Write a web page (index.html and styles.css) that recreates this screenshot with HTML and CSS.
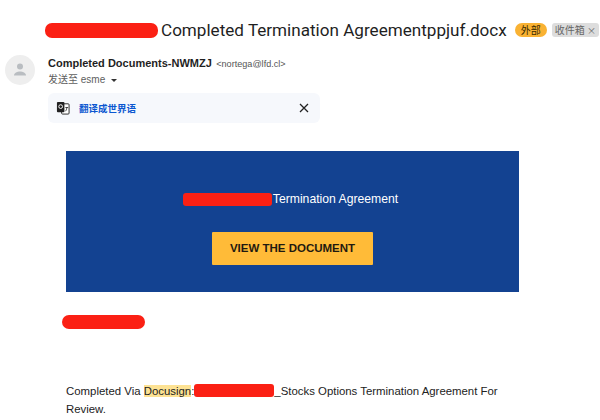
FILE: index.html
```html
<!DOCTYPE html>
<html lang="en">
<head>
    <meta charset="UTF-8">
    <title>Completed Termination Agreement</title>
    <link rel="stylesheet" href="styles.css">
</head>
<body>
    <div class="subject-row">
        <span class="redact redact-subject"></span>
        <h1 class="subject">Completed Termination Agreementppjuf.docx</h1>
        <span class="tag tag-external">外部</span>
        <span class="tag tag-inbox">收件箱 <span class="tag-x">×</span></span>
    </div>

    <div class="sender-row">
        <div class="avatar">
            <svg width="20" height="20" viewBox="0 0 20 20">
                <circle cx="10" cy="6.5" r="3" fill="#b9bdc1"/>
                <path d="M4 15.500c0-2.600 3.500-4 6-4s6 1.400 6 4z" fill="#b9bdc1"/>
            </svg>
        </div>
        <div class="sender-info">
            <div class="sender-line">
                <span class="sender-name">Completed Documents-NWMZJ</span>
                <span class="sender-mail">&lt;nortega@lfd.cl&gt;</span>
            </div>
            <div class="to-line">发送至 esme <span class="caret"></span></div>
            <div class="translate-bar">
                <svg class="translate-icon" width="14" height="14" viewBox="0 0 15 15">
                    <rect x="6" y="3" width="8" height="11" rx="1" fill="#fff" stroke="#222"/>
                    <rect x="1" y="1" width="8" height="11" rx="1" fill="#222"/>
                    <circle cx="5" cy="6" r="2" fill="none" stroke="#fff"/>
                    <path d="M10 7h3M11.500 7c0 2-.6 3-1.500 4" fill="none" stroke="#222" stroke-width=".9"/>
                </svg>
                <span class="translate-link">翻译成世界语</span>
                <svg class="close-icon" width="10" height="10" viewBox="0 0 10 10">
                    <path d="M1 1l8 8M9 1l-8 8" stroke="#222" stroke-width="1.300"/>
                </svg>
            </div>
        </div>
    </div>

    <div class="mail-body">
        <div class="banner">
            <div class="banner-title">
                <span class="redact redact-banner"></span><span>Termination Agreement</span>
            </div>
            <a class="view-button">VIEW THE DOCUMENT</a>
        </div>

        <span class="redact redact-name"></span>

        <p class="mail-text">Completed Via <mark class="hl">Docusign</mark>:<span class="redact redact-inline"></span>_Stocks Options Termination Agreement For Review.</p>
    </div>
</body>
</html>
```

FILE: styles.css
```css
body {
    margin: 0;
    width: 600px;
    height: 420px;
    overflow: hidden;
    background: #fff;
    color: #1f1f1f;
    font-family: 'Liberation Sans', 'Noto Sans CJK SC', sans-serif;
}

.redact {
    display: inline-block;
    background: #fb2014;
    border-radius: 7px;
}

.subject-row {
    display: flex;
    align-items: center;
    padding: 19px 0 0 45px;
    height: 22px;
}

.redact-subject {
    flex-shrink: 0;
    width: 113px;
    height: 15px;
    margin-right: 3px;
}

.subject {
    margin: 0;
    font-family: 'Roboto', sans-serif;
    font-size: 17.1px;
    font-weight: 400;
    white-space: nowrap;
}

.tag {
    display: inline-block;
    flex-shrink: 0;
    font-size: 10px;
    font-family: 'Noto Sans CJK SC', sans-serif;
    line-height: 14px;
    height: 14px;
    white-space: nowrap;
}

.tag-external {
    margin-left: 8px;
    padding: 0 6px;
    background: #f9b233;
    border-radius: 7px;
    color: #3a2a00;
}

.tag-inbox {
    margin-left: 5px;
    padding: 0 3px;
    background: #dddddd;
    border-radius: 3px;
    color: #666;
}

.tag-x {
    font-size: 9px;
}

.sender-row {
    display: flex;
    padding: 14px 0 0 5px;
}

.avatar {
    width: 30px;
    height: 30px;
    border-radius: 50%;
    background: #eeeeee;
    display: flex;
    align-items: center;
    justify-content: center;
    margin-right: 13px;
}

.sender-line {
    line-height: 14px;
}

.sender-name {
    font-size: 11px;
    font-weight: 700;
}

.sender-mail {
    font-size: 9.1px;
    color: #555;
}

.to-line {
    font-size: 10px;
    line-height: 14px;
    margin-top: 2px;
    color: #5e5e5e;
}

.caret {
    display: inline-block;
    margin-left: 3px;
    vertical-align: middle;
    border-left: 3px solid transparent;
    border-right: 3px solid transparent;
    border-top: 3px solid #333;
}

.translate-bar {
    display: flex;
    align-items: center;
    width: 272px;
    height: 30px;
    margin-top: 6px;
    background: #f6f8fc;
    border-radius: 6px;
}

.translate-icon {
    margin-left: 8px;
}

.translate-link {
    margin-left: 9px;
    font-size: 9.5px;
    font-weight: 700;
    color: #0b57d0;
}

.close-icon {
    margin-left: auto;
    margin-right: 11px;
}

.mail-body {
    padding: 28px 0 0 66px;
}

.banner {
    width: 453px;
    height: 141px;
    background: #134291;
    display: flex;
    flex-direction: column;
    align-items: center;
}

.banner-title {
    display: flex;
    align-items: center;
    margin: 41px 4px 0 0;
    color: #fff;
    font-size: 12.2px;
    line-height: 15px;
}

.redact-banner {
    width: 89px;
    height: 13px;
    border-radius: 3px;
    margin-right: 1px;
}

.view-button {
    margin-top: 25px;
    width: 161px;
    height: 33px;
    line-height: 33px;
    text-align: center;
    background: #ffbb38;
    border-radius: 1px;
    color: #1f1a10;
    font-size: 11.5px;
    font-weight: 700;
}

.redact-name {
    display: block;
    width: 83px;
    height: 14px;
    margin: 23px 0 0 -4px;
}

.mail-text {
    width: 450px;
    margin: 53px 0 0;
    font-size: 11.4px;
    line-height: 18px;
    color: #222;
}

.hl {
    background: #fde293;
    color: inherit;
}

.redact-inline {
    width: 80px;
    height: 13px;
    border-radius: 3px;
    vertical-align: -2px;
}
```
